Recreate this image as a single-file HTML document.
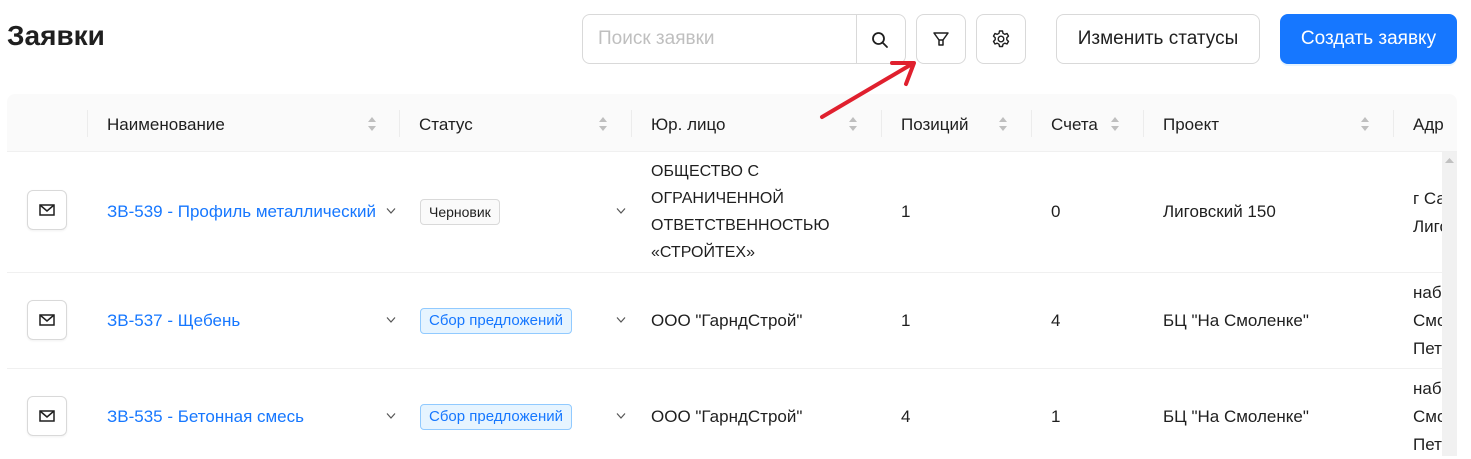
<!DOCTYPE html>
<html><head><meta charset="utf-8"><style>
*{box-sizing:border-box;margin:0;padding:0}
body{width:1471px;height:456px;overflow:hidden;background:#fff;font-family:"Liberation Sans","DejaVu Sans",sans-serif;color:#1f1f1f;font-size:17px;position:relative}
.a{position:absolute;white-space:nowrap}
.btn{position:absolute;border:1px solid #d9d9d9;border-radius:8px;background:#fff;display:flex;align-items:center;justify-content:center}
.sep{position:absolute;top:110px;width:1px;height:27px;background:#ececec}
.sort{position:absolute;top:115px;width:10px;height:18px}
.hl{position:absolute;left:7px;width:1450px;height:1px;background:#f0f0f0}
.mail{position:absolute;left:27px;width:40px;height:40px;border:1px solid #d9d9d9;border-radius:6px;display:flex;align-items:center;justify-content:center;box-shadow:0 1px 2px rgba(0,0,0,.06)}
.lnk{color:#1677ff}
.chev{position:absolute;width:10px;height:8px}
.tag{position:absolute;left:420px;height:26px;border-radius:4px;font-size:15px;line-height:24px;padding:0 8px}
.blue{background:#e6f4ff;border:1px solid #91caff;color:#1677ff}
.gray{background:#fafafa;border:1px solid #d9d9d9;color:#1f1f1f}
</style></head><body>
<div class="a" style="left:7px;top:20px;font-size:28px;font-weight:bold;color:#1f1f1f">Заявки</div>

<div class="btn" style="left:582px;top:14px;width:324px;height:50px;justify-content:flex-start">
 <span style="margin-left:15px;color:#bfbfbf;font-size:19px">Поиск заявки</span>
 <div style="position:absolute;left:273px;top:0;width:1px;height:48px;background:#d9d9d9"></div>
 <svg style="position:absolute;left:288px;top:16px" width="18" height="18" viewBox="0 0 18 18"><circle cx="7.5" cy="7.5" r="5.5" fill="none" stroke="#1f1f1f" stroke-width="1.8"/><path d="M11.5 11.5L16 16" stroke="#1f1f1f" stroke-width="1.8" stroke-linecap="round"/></svg>
</div>
<div class="btn" style="left:916px;top:14px;width:50px;height:50px"><svg width="18" height="18" viewBox="0 0 18 18"><path d="M2 3h14l-5 7v5H7v-5z" fill="none" stroke="#1f1f1f" stroke-width="1.5" stroke-linejoin="round"/><path d="M6.5 10h5" stroke="#1f1f1f" stroke-width="1.5"/></svg></div>
<div class="btn" style="left:976px;top:14px;width:50px;height:50px"><svg width="20" height="20" viewBox="0 0 20 20"><path d="M8.5 2h3l.5 2.3 1.8 1 2.2-.8 1.5 2.6-1.7 1.6v2.1l1.7 1.6-1.5 2.6-2.2-.8-1.8 1-.5 2.3h-3l-.5-2.3-1.8-1-2.2.8-1.5-2.6 1.7-1.6V8.7L2.5 7.1 4 4.5l2.2.8 1.8-1z" fill="none" stroke="#1f1f1f" stroke-width="1.4" stroke-linejoin="round"/><circle cx="10" cy="10" r="2.8" fill="none" stroke="#1f1f1f" stroke-width="1.4"/></svg></div>
<div class="btn" style="left:1056px;top:14px;width:204px;height:50px;font-size:19px">Изменить статусы</div>
<div class="btn" style="left:1280px;top:14px;width:177px;height:50px;font-size:19px;background:#1677ff;border-color:#1677ff;color:#fff;box-shadow:0 2px 0 rgba(5,145,255,.1)">Создать заявку</div>

<div class="a" style="left:7px;top:94px;width:1450px;height:58px;background:#fafafa;border-radius:8px 8px 0 0;border-bottom:1px solid #f0f0f0"></div>
<div class="sep" style="left:87px"></div><div class="sep" style="left:399px"></div><div class="sep" style="left:631px"></div><div class="sep" style="left:881px"></div><div class="sep" style="left:1031px"></div><div class="sep" style="left:1143px"></div><div class="sep" style="left:1393px"></div>
<div class="a" style="left:107px;top:115px">Наименование</div>
<div class="a" style="left:419px;top:115px">Статус</div>
<div class="a" style="left:651px;top:115px">Юр. лицо</div>
<div class="a" style="left:901px;top:115px">Позиций</div>
<div class="a" style="left:1051px;top:115px">Счета</div>
<div class="a" style="left:1163px;top:115px">Проект</div>
<div class="a" style="left:1413px;top:115px;width:30px;overflow:hidden">Адрес</div>
<svg class="sort" style="left:367px" viewBox="0 0 10 18"><path d="M1 7L5 2L9 7z M1 11L5 16L9 11z" fill="#bfbfbf"/></svg>
<svg class="sort" style="left:598px" viewBox="0 0 10 18"><path d="M1 7L5 2L9 7z M1 11L5 16L9 11z" fill="#bfbfbf"/></svg>
<svg class="sort" style="left:848px" viewBox="0 0 10 18"><path d="M1 7L5 2L9 7z M1 11L5 16L9 11z" fill="#bfbfbf"/></svg>
<svg class="sort" style="left:998px" viewBox="0 0 10 18"><path d="M1 7L5 2L9 7z M1 11L5 16L9 11z" fill="#bfbfbf"/></svg>
<svg class="sort" style="left:1110px" viewBox="0 0 10 18"><path d="M1 7L5 2L9 7z M1 11L5 16L9 11z" fill="#bfbfbf"/></svg>
<svg class="sort" style="left:1360px" viewBox="0 0 10 18"><path d="M1 7L5 2L9 7z M1 11L5 16L9 11z" fill="#bfbfbf"/></svg>

<svg class="a" style="left:810px;top:55px;z-index:5" width="110" height="70" viewBox="0 0 110 70"><path d="M12 62L102 9" stroke="#e0202e" stroke-width="4" stroke-linecap="round"/><path d="M82 8L104 8L96 29" fill="none" stroke="#e0202e" stroke-width="4" stroke-linecap="round" stroke-linejoin="round"/></svg>

<div class="hl" style="top:272px"></div><div class="hl" style="top:368px"></div>

<!-- row1 -->
<div class="mail" style="top:190px"><svg width="16" height="14" viewBox="0 0 16 14"><rect x="1" y="2" width="14" height="10" fill="none" stroke="#1f1f1f" stroke-width="1.5"/><path d="M1 2l7 6 7-6" fill="none" stroke="#1f1f1f" stroke-width="1.5"/></svg></div>
<div class="a lnk" style="left:107px;top:202px">ЗВ-539 - Профиль металлический</div>
<svg class="chev" style="left:386px;top:207px" viewBox="0 0 10 8"><path d="M1 1.5L5 6L9 1.5" fill="none" stroke="#555" stroke-width="1.2"/></svg>
<div class="tag gray" style="top:199px;font-size:14px">Черновик</div>
<svg class="chev" style="left:616px;top:207px" viewBox="0 0 10 8"><path d="M1 1.5L5 6L9 1.5" fill="none" stroke="#555" stroke-width="1.2"/></svg>
<div class="a" style="left:651px;top:158px;line-height:27px;font-size:16px">ОБЩЕСТВО С<br>ОГРАНИЧЕННОЙ<br>ОТВЕТСТВЕННОСТЬЮ<br>«СТРОЙТЕХ»</div>
<div class="a" style="left:901px;top:202px">1</div>
<div class="a" style="left:1051px;top:202px">0</div>
<div class="a" style="left:1163px;top:202px">Лиговский 150</div>
<div class="a" style="left:1413px;top:185px;line-height:28px;width:29px;overflow:hidden">г Санкт<br>Лиговский</div>

<!-- row2 -->
<div class="mail" style="top:300px"><svg width="16" height="14" viewBox="0 0 16 14"><rect x="1" y="2" width="14" height="10" fill="none" stroke="#1f1f1f" stroke-width="1.5"/><path d="M1 2l7 6 7-6" fill="none" stroke="#1f1f1f" stroke-width="1.5"/></svg></div>
<div class="a lnk" style="left:107px;top:311px">ЗВ-537 - Щебень</div>
<svg class="chev" style="left:386px;top:316px" viewBox="0 0 10 8"><path d="M1 1.5L5 6L9 1.5" fill="none" stroke="#555" stroke-width="1.2"/></svg>
<div class="tag blue" style="top:308px">Сбор предложений</div>
<svg class="chev" style="left:616px;top:316px" viewBox="0 0 10 8"><path d="M1 1.5L5 6L9 1.5" fill="none" stroke="#555" stroke-width="1.2"/></svg>
<div class="a" style="left:651px;top:311px">ООО "ГарндСтрой"</div>
<div class="a" style="left:901px;top:311px">1</div>
<div class="a" style="left:1051px;top:311px">4</div>
<div class="a" style="left:1163px;top:311px">БЦ "На Смоленке"</div>
<div class="a" style="left:1413px;top:279px;line-height:28px;width:29px;overflow:hidden">набережная<br>Смоленки<br>Петербург</div>

<!-- row3 -->
<div class="mail" style="top:396px"><svg width="16" height="14" viewBox="0 0 16 14"><rect x="1" y="2" width="14" height="10" fill="none" stroke="#1f1f1f" stroke-width="1.5"/><path d="M1 2l7 6 7-6" fill="none" stroke="#1f1f1f" stroke-width="1.5"/></svg></div>
<div class="a lnk" style="left:107px;top:407px">ЗВ-535 - Бетонная смесь</div>
<svg class="chev" style="left:386px;top:412px" viewBox="0 0 10 8"><path d="M1 1.5L5 6L9 1.5" fill="none" stroke="#555" stroke-width="1.2"/></svg>
<div class="tag blue" style="top:404px">Сбор предложений</div>
<svg class="chev" style="left:616px;top:412px" viewBox="0 0 10 8"><path d="M1 1.5L5 6L9 1.5" fill="none" stroke="#555" stroke-width="1.2"/></svg>
<div class="a" style="left:651px;top:407px">ООО "ГарндСтрой"</div>
<div class="a" style="left:901px;top:407px">4</div>
<div class="a" style="left:1051px;top:407px">1</div>
<div class="a" style="left:1163px;top:407px">БЦ "На Смоленке"</div>
<div class="a" style="left:1413px;top:375px;line-height:28px;width:29px;overflow:hidden">набережная<br>Смоленки<br>Петербург</div>

<div class="a" style="left:1442px;top:152px;width:15px;height:304px;background:#f1f1f1"></div>
<svg class="a" style="left:1444px;top:156px" width="11" height="8" viewBox="0 0 11 8"><path d="M1 7L5.5 2L10 7z" fill="#c1c1c1"/></svg>
</body></html>
